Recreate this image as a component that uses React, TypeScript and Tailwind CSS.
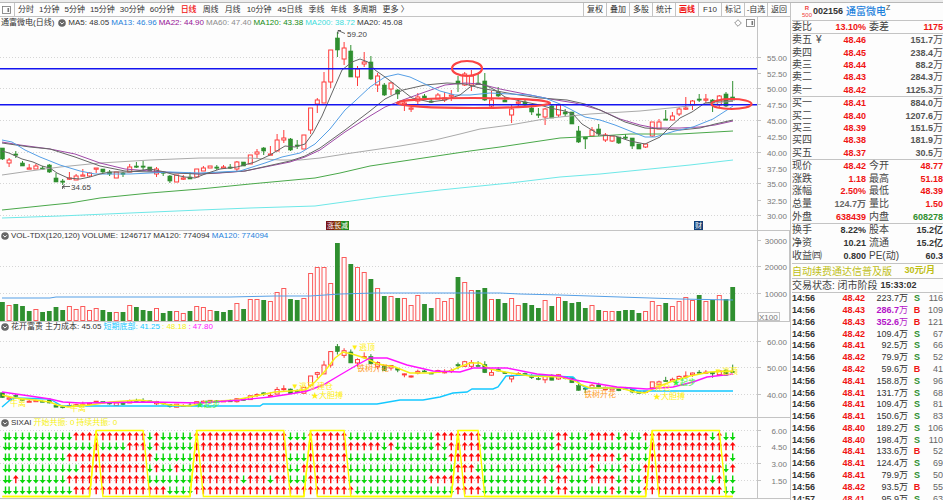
import { useState } from "react";

type Point = [number, number];

interface Tick {
  time: string;
  price: string;
  amount: string;
  side: "S" | "B";
  count: number;
  big?: boolean;
}

const RED = "#ff3b3b";
const GREEN = "#2f8f2f";

const minutePeriods = ["分时", "1分钟", "5分钟", "15分钟", "30分钟", "60分钟"];
const otherPeriods = ["日线", "周线", "月线", "10分钟", "45日线", "季线", "年线", "多周期", "更多 〉"];
const tools = ["复权", "叠加", "多股", "统计", "画线", "F10", "标记", "-自选", "返回"];

// high, body top, body bottom, low, 1 = rising / 0 = falling
const candles: number[][] = [
  [148, 148, 159, 160, 0], [158, 160, 163, 167, 1], [151, 154, 155, 158, 0], [161, 163, 166, 166, 0],
  [164, 168, 169, 169, 1], [164, 166, 169, 169, 1], [166, 168, 169, 170, 0], [164, 165, 172, 173, 0],
  [173, 178, 182, 182, 0], [179, 181, 182, 185, 0], [172, 178, 179, 180, 1], [174, 176, 180, 180, 1],
  [169, 175, 176, 176, 1], [172, 173, 176, 177, 1], [168, 168, 169, 173, 1], [169, 169, 172, 173, 0],
  [170, 172, 174, 176, 0], [172, 172, 178, 178, 1], [172, 173, 174, 177, 0], [164, 167, 172, 172, 1],
  [162, 166, 167, 168, 0], [161, 166, 167, 170, 0], [167, 167, 171, 171, 0], [167, 169, 174, 177, 1],
  [171, 172, 173, 176, 0], [175, 176, 181, 183, 0], [175, 175, 182, 182, 1], [175, 178, 179, 180, 1],
  [172, 177, 179, 179, 0], [169, 169, 177, 177, 1], [166, 168, 171, 171, 1], [166, 166, 168, 168, 1],
  [165, 167, 168, 170, 0], [165, 167, 168, 169, 1], [164, 167, 168, 169, 0], [161, 162, 169, 171, 1],
  [162, 162, 166, 166, 0], [155, 155, 164, 164, 1], [149, 152, 154, 158, 1], [147, 148, 151, 155, 0],
  [146, 154, 155, 155, 1], [134, 140, 151, 151, 1], [130, 138, 140, 143, 1], [138, 139, 150, 151, 0],
  [140, 145, 146, 149, 0], [135, 135, 149, 149, 1], [108, 108, 130, 134, 1], [98, 100, 104, 113, 1],
  [72, 82, 103, 103, 1], [50, 50, 82, 88, 1], [32, 38, 50, 57, 0], [42, 48, 59, 65, 1],
  [45, 51, 77, 77, 0], [66, 69, 77, 86, 1], [52, 62, 64, 67, 1], [56, 62, 79, 80, 0],
  [73, 76, 85, 92, 1], [83, 85, 95, 96, 0], [82, 83, 89, 95, 1], [89, 90, 94, 99, 0],
  [102, 103, 104, 111, 1], [107, 108, 109, 112, 1], [93, 97, 101, 104, 1], [94, 96, 98, 99, 0],
  [99, 101, 102, 103, 0], [93, 95, 99, 99, 1], [92, 98, 100, 102, 1], [90, 95, 96, 101, 1],
  [76, 81, 84, 92, 0], [72, 74, 85, 86, 1], [70, 76, 85, 91, 1], [73, 83, 84, 84, 0],
  [73, 81, 100, 101, 0], [91, 100, 106, 107, 1], [87, 92, 96, 97, 0], [97, 100, 102, 102, 0],
  [105, 109, 115, 123, 1], [99, 102, 103, 107, 1], [100, 102, 105, 106, 0], [104, 108, 112, 115, 0],
  [108, 114, 115, 118, 0], [108, 109, 117, 125, 1], [104, 106, 118, 118, 0], [104, 105, 115, 117, 1],
  [109, 112, 114, 116, 0], [112, 112, 124, 124, 0], [126, 131, 142, 143, 0], [137, 137, 139, 149, 0],
  [127, 130, 136, 137, 1], [124, 129, 134, 136, 0], [133, 135, 140, 142, 1], [136, 136, 141, 142, 1],
  [137, 137, 143, 144, 0], [134, 137, 138, 139, 0], [138, 138, 146, 149, 0], [144, 144, 149, 149, 0],
  [144, 144, 147, 148, 1], [122, 122, 136, 137, 1], [119, 122, 129, 129, 1], [110, 119, 120, 120, 0],
  [112, 116, 120, 120, 1], [107, 109, 114, 116, 1], [97, 108, 109, 110, 1], [100, 101, 105, 110, 1],
  [94, 99, 100, 102, 0], [94, 99, 100, 103, 1], [99, 100, 103, 112, 0], [95, 96, 105, 107, 1],
  [92, 94, 106, 107, 0], [81, 97, 100, 100, 0],
];

// bar height; a negative value is a falling day
const volumes = [
  -19, 16, -17, -15, -10, 12, -9, -10, -14, -11, 15, 12, 15, 11, 13, -11, -9, 9, -9, 16,
  -14, -11, -10, 13, -8, -10, 10, 8, -10, 15, 14, 11, -10, -9, -11, 18, -12, 22, 22, -21,
  20, 29, 33, -22, -21, 23, 48, 54, 54, 38, -78, 64, -57, 54, 49, -42, 33, -25, 25, -23,
  23, 16, 26, -17, -13, 23, 20, 23, -44, 39, 31, -31, -33, 22, -22, -18, 23, 16, -18, -16,
  -13, 21, -15, 24, -20, -18, -19, -13, 16, -11, 10, 10, -10, -11, -11, -8, 10, 20, 16, -18,
  15, 20, 24, 21, -26, 20, -21, 26, -22, -34,
];

const ma5: Point[] = [
  [2, 151], [9, 153], [22, 159], [33, 162], [42, 166], [50, 168], [57, 173], [68, 178], [80, 179],
  [90, 177], [100, 174], [110, 172], [130, 172], [150, 169], [165, 172], [175, 175], [185, 177],
  [195, 178], [205, 174], [220, 169], [237, 167], [255, 162], [270, 155], [285, 146], [295, 147],
  [305, 144], [313, 133], [322, 116], [335, 86], [342, 70], [352, 62], [360, 59], [368, 62],
  [375, 70], [385, 77], [393, 83], [403, 91], [412, 98], [430, 102], [445, 100], [460, 95],
  [470, 87], [478, 84], [485, 85], [495, 90], [505, 97], [520, 101], [540, 105], [550, 108],
  [565, 111], [573, 114], [582, 124], [600, 135], [615, 136], [630, 141], [645, 144], [660, 137],
  [670, 127], [680, 118], [692, 112], [705, 103], [720, 101], [733, 101],
];
const ma13: Point[] = [
  [2, 140], [12, 142], [25, 150], [40, 157], [60, 165], [80, 171], [95, 174], [130, 174], [170, 172],
  [200, 173], [240, 171], [265, 163], [282, 157], [300, 153], [315, 144], [330, 129], [345, 110],
  [355, 101], [370, 87], [385, 77], [398, 74], [410, 77], [425, 84], [440, 91], [455, 95],
  [470, 95], [490, 93], [510, 94], [530, 95], [545, 98], [560, 104], [570, 109], [585, 117],
  [600, 120], [615, 125], [630, 131], [645, 137], [655, 137], [675, 131], [693, 127], [713, 119],
  [727, 110], [733, 106],
];
const ma22: Point[] = [
  [2, 142], [20, 145], [50, 149], [75, 154], [100, 163], [125, 169], [150, 171], [180, 173],
  [200, 174], [220, 173], [245, 171], [270, 166], [290, 162], [305, 157], [320, 150], [345, 132],
  [370, 116], [385, 107], [400, 101], [425, 92], [445, 85], [465, 83], [480, 84], [500, 89],
  [525, 94], [550, 99], [575, 103], [600, 110], [620, 119], [640, 125], [655, 128], [680, 128],
  [700, 127], [715, 125], [733, 121],
];
const ma20: Point[] = [
  [2, 143], [30, 147], [50, 149], [75, 157], [100, 166], [125, 171], [150, 172], [200, 174],
  [245, 171], [290, 161], [305, 156], [320, 148], [345, 130], [370, 111], [385, 99], [403, 90],
  [425, 85], [447, 83], [465, 84], [480, 88], [513, 94], [540, 98], [567, 100], [585, 104],
  [600, 110], [625, 122], [645, 128], [680, 130], [700, 128], [715, 124], [733, 120],
];
const ma60: Point[] = [
  [2, 175], [30, 171], [60, 167], [100, 163], [150, 160], [200, 158], [250, 158], [280, 160],
  [300, 160], [320, 158], [345, 154], [400, 146], [435, 140], [460, 134], [480, 129], [510, 125],
  [550, 118], [590, 114], [640, 111], [680, 107], [705, 104], [733, 101],
];
const ma120: Point[] = [
  [2, 210], [50, 205], [70, 203], [100, 198], [150, 193], [200, 189], [250, 184], [315, 178],
  [340, 173], [370, 166], [410, 160], [470, 151], [500, 147], [560, 138], [600, 136], [630, 134],
  [680, 134], [733, 131],
];
const ma200: Point[] = [
  [2, 218], [60, 216], [130, 213], [200, 210], [250, 208], [315, 206], [380, 197], [440, 190],
  [510, 183], [560, 177], [600, 174], [640, 170], [690, 165], [733, 160],
];
const volumeMa: Point[] = [
  [2, 298], [50, 298], [56, 297], [230, 297], [275, 296], [310, 296], [340, 294], [375, 293],
  [500, 293], [520, 294], [560, 295], [620, 297], [680, 299], [733, 300],
];
const costLine: Point[] = [
  [2, 395], [15, 398], [35, 400], [50, 402], [57, 405], [68, 407], [90, 405], [110, 402],
  [140, 400], [155, 402], [170, 405], [190, 406], [205, 402], [235, 400], [255, 396], [275, 392],
  [290, 391], [305, 390], [315, 382], [325, 371], [335, 358], [343, 352], [352, 354], [365, 358],
  [378, 364], [395, 367], [410, 373], [430, 373], [450, 371], [462, 366], [470, 363], [480, 363],
  [490, 369], [505, 372], [530, 376], [560, 377], [573, 380], [582, 385], [590, 388], [620, 388],
  [635, 392], [645, 393], [655, 388], [670, 382], [690, 376], [710, 372], [733, 371],
];
const trendLine: Point[] = [
  [2, 392], [30, 396], [50, 399], [63, 402], [80, 403], [150, 402], [200, 403], [240, 400],
  [270, 397], [290, 394], [307, 391], [323, 385], [340, 375], [357, 365], [370, 358], [387, 358],
  [407, 365], [433, 371], [460, 372], [473, 368], [507, 368], [537, 374], [560, 376], [575, 380],
  [593, 383], [617, 387], [647, 389], [673, 387], [693, 382], [707, 377], [733, 374],
];
const bottomLine: Point[] = [
  [2, 407], [10, 400], [15, 398], [50, 399], [55, 402], [62, 406], [260, 406], [263, 404],
  [377, 404], [400, 400], [423, 400], [440, 397], [453, 393], [467, 392], [472, 389], [493, 389],
  [498, 387], [506, 376], [523, 375], [573, 377], [580, 384], [586, 388], [630, 388], [638, 391],
  [733, 391],
];

// run lengths of each arrow row, starting with a "down" run
const arrowRuns = [
  [11, 11, 1, 1, 5, 14, 3, 6, 13, 7, 11, 2, 3, 4, 1, 1, 2, 10, 1, 1, 2],
  [14, 1, 4, 3, 1, 1, 5, 28, 1, 1, 6, 1, 1, 5, 11, 1, 13, 13],
  [10, 13, 6, 14, 3, 6, 15, 5, 16, 4, 1, 1, 3, 12, 1],
  [12, 10, 1, 1, 2, 1, 2, 14, 2, 7, 16, 3, 12, 1, 4, 1, 4, 1, 2, 12, 1, 1],
  [2, 1, 7, 12, 7, 7, 1, 3, 1, 2, 3, 6, 12, 8, 9, 1, 1, 2, 3, 4, 1, 1, 2, 10, 1, 1, 2],
  [11, 14, 4, 24, 15, 4, 11, 2, 6, 1, 1, 1, 2, 12, 2],
];
const arrowRowY = [436, 446, 457, 468, 479, 490];
const resonance: Point[] = [[14, 21], [29, 42], [46, 51], [68, 71], [97, 107]];

const sells = [
  ["卖五", "48.46", "151.7"],
  ["卖四", "48.45", "238.4"],
  ["卖三", "48.44", "88.2"],
  ["卖二", "48.43", "284.3"],
  ["卖一", "48.42", "1125.3"],
];
const buys = [
  ["买一", "48.41", "884.0"],
  ["买二", "48.40", "1207.6"],
  ["买三", "48.39", "151.5"],
  ["买四", "48.38", "181.9"],
  ["买五", "48.37", "30.5"],
];

const up = "text-[#f01414]";
const flat = "text-[#333]";
const down = "text-[#2f8f2f]";

const quotes = [
  ["现价", "48.42", up, "今开", "48.77", up],
  ["涨跌", "1.18", up, "最高", "51.18", up],
  ["涨幅", "2.50%", up, "最低", "48.39", up],
  ["总量", "124.7万", "text-[#666]", "量比", "1.50", up],
  ["外盘", "638439", up, "内盘", "608278", down],
];
const basics = [
  ["换手", "8.22%", flat, "股本", "15.2亿", flat],
  ["净资", "10.21", flat, "流通", "15.2亿", flat],
  ["收益㈣", "0.800", flat, "PE(动)", "60.3", flat],
];

const ticks: Tick[] = [
  { time: "14:56", price: "48.42", amount: "223.7", side: "S", count: 116 },
  { time: "14:56", price: "48.43", amount: "286.7", side: "B", count: 109, big: true },
  { time: "14:56", price: "48.43", amount: "352.6", side: "B", count: 121, big: true },
  { time: "14:56", price: "48.42", amount: "109.4", side: "S", count: 67 },
  { time: "14:56", price: "48.41", amount: "92.5", side: "S", count: 66 },
  { time: "14:56", price: "48.42", amount: "79.9", side: "S", count: 52 },
  { time: "14:56", price: "48.42", amount: "59.6", side: "B", count: 41 },
  { time: "14:56", price: "48.41", amount: "158.8", side: "S", count: 96 },
  { time: "14:56", price: "48.41", amount: "131.7", side: "S", count: 68 },
  { time: "14:56", price: "48.41", amount: "109.4", side: "S", count: 81 },
  { time: "14:56", price: "48.41", amount: "150.6", side: "S", count: 83 },
  { time: "14:56", price: "48.40", amount: "189.2", side: "S", count: 106 },
  { time: "14:56", price: "48.40", amount: "198.4", side: "S", count: 110 },
  { time: "14:56", price: "48.41", amount: "133.6", side: "B", count: 52 },
  { time: "14:56", price: "48.41", amount: "124.4", side: "S", count: 69 },
  { time: "14:56", price: "48.41", amount: "79.9", side: "S", count: 50 },
  { time: "14:56", price: "48.42", amount: "93.5", side: "B", count: 55 },
  { time: "14:57", price: "48.41", amount: "95.9", side: "S", count: 63 },
];

const columnX = (index: number) => 2.4 + index * 6.7;
const toPoints = (points: Point[]) => points.map((p) => p.join(",")).join(" ");

function Line({ points, color, width = 1 }: { points: Point[]; color: string; width?: number }) {
  return <polyline points={toPoints(points)} fill="none" stroke={color} strokeWidth={width} />;
}

function Axis({ top, bottom, labels, grid }: {
  top: number;
  bottom: number;
  labels: [string, number][];
  grid: number[];
}) {
  return (
    <g>
      {grid.map((y) => (
        <line key={y} x1="0" x2="757" y1={y + 0.5} y2={y + 0.5} stroke="#d6d6d6" strokeDasharray="1 2" />
      ))}
      <line x1="757.5" x2="757.5" y1={top} y2={bottom} stroke="#c4c4c4" />
      {labels.map(([label, y]) => (
        <g key={label}>
          <line x1="758" x2="761" y1={y + 0.5} y2={y + 0.5} stroke="#c4c4c4" />
          <text x="787" y={y + 4} textAnchor="end" fontSize="8" fill="#787878">
            {label}
          </text>
        </g>
      ))}
    </g>
  );
}

function Candles({ project, small }: { project: (y: number) => number; small?: boolean }) {
  return (
    <g>
      {candles.map(([high, top, bottom, low, rising], index) => {
        const x = columnX(index);
        const y = project(top);
        const height = Math.max(project(bottom) - y, small ? 1 : 1.2);
        const color = rising ? RED : GREEN;
        return (
          <g key={index}>
            <line x1={x} x2={x} y1={project(high)} y2={project(low)} stroke={color} />
            <rect
              x={x - 2}
              y={y}
              width="4"
              height={height}
              fill={rising ? "#fdfdfd" : GREEN}
              stroke={color}
              strokeWidth={rising ? 1 : 0.6}
            />
          </g>
        );
      })}
    </g>
  );
}

function CollapseButton({ label }: { label: string }) {
  return (
    <button aria-label={label} className="shrink-0">
      <svg viewBox="0 0 8 8" className="h-2 w-2">
        <circle cx="4" cy="4" r="3.8" fill="#666" />
        <path d="M2.2 3.3 4 5.1 5.8 3.3" fill="none" stroke="#fff" strokeWidth="1" />
      </svg>
    </button>
  );
}

function PanelIcon() {
  return (
    <svg viewBox="0 0 9 8" className="h-2 w-[9px]">
      <rect x=".5" y=".5" width="8" height="7" fill="none" stroke="#777" strokeWidth=".8" />
      <rect x="5.5" y="2" width="1.6" height="4" fill="#777" />
    </svg>
  );
}

function PanelHeader({ children, className }: { children: React.ReactNode; className: string }) {
  return (
    <div className={`flex leading-[10px] ${className}`}>
      <div className="flex min-w-0 flex-1 items-center gap-[2px] border-r border-[#c4c4c4] pl-px whitespace-nowrap">
        {children}
      </div>
      <div className="w-8" />
    </div>
  );
}

function PriceChart() {
  return (
    <svg viewBox="0 29 790 201" className="block h-auto w-full overflow-visible">
      <Axis
        top={29}
        bottom={230}
        grid={[57, 88, 120, 152, 183, 215]}
        labels={[
          ["55.00", 57], ["52.50", 73], ["50.00", 88], ["47.50", 104], ["45.00", 120], ["42.50", 136],
          ["40.00", 152], ["37.50", 168], ["35.00", 183], ["32.50", 200], ["30.00", 215],
        ]}
      />
      <Candles project={(y) => y} />
      <Line points={ma200} color="#6ee8e8" />
      <Line points={ma120} color="#4aa84a" />
      <Line points={ma60} color="#aaaaaa" />
      <Line points={ma22} color="#a04aa8" />
      <Line points={ma20} color="#666666" />
      <Line points={ma13} color="#559fe6" />
      <Line points={ma5} color="#666666" />
      <g stroke="#1414f0" strokeWidth="1.5">
        <line x1="0" x2="757" y1="68.8" y2="68.8" />
        <line x1="0" x2="757" y1="104.8" y2="104.8" />
      </g>
      <g fill="none" stroke="#fb4444" strokeWidth="2.2">
        <ellipse cx="467" cy="68.5" rx="15" ry="7.5" />
        <ellipse cx="473.5" cy="103" rx="76.5" ry="5" />
        <ellipse cx="731.5" cy="104" rx="20" ry="5" />
      </g>
      <g fill="none" stroke="#444" strokeWidth=".8">
        <path d="M338 30.5 345 33.5M338 34V30.5H341" />
        <path d="M62.5 186.5H70M62.5 189V186.5M65 184.5 62.5 186.5 65 188.5" />
      </g>
      <g fontSize="8" fill="#444">
        <text x="347" y="37">59.20</text>
        <text x="71" y="190">34.65</text>
      </g>
      <g>
        <rect x="326" y="221" width="9" height="9" fill="#7a1414" />
        <rect x="334" y="221" width="8" height="9" fill="#8a4a14" />
        <rect x="341" y="221" width="8" height="9" fill="#1f8a1f" />
        <rect x="694" y="221" width="9" height="9" fill="#123f78" />
      </g>
      <g fontSize="7" fill="#fff">
        <text x="327" y="228">涨</text>
        <text x="334" y="228">长</text>
        <text x="341" y="228">减</text>
        <text x="695" y="228">财</text>
      </g>
    </svg>
  );
}

function VolumeChart() {
  return (
    <svg viewBox="0 241 790 80" className="block h-auto w-full overflow-visible">
      <Axis
        top={241}
        bottom={321}
        grid={[266, 293]}
        labels={[["30000", 240], ["20000", 266], ["10000", 293]]}
      />
      <line x1="789.5" x2="789.5" y1="231" y2="321" stroke="#c4c4c4" />
      {volumes.map((value, index) => {
        const height = Math.abs(value);
        const rising = value > 0;
        return (
          <rect
            key={index}
            x={columnX(index) - (rising ? 2 : 2.4)}
            y={321 - height + (rising ? 0.5 : 0)}
            width={rising ? 4 : 4.8}
            height={height - (rising ? 1 : 0)}
            fill={rising ? "#fdfdfd" : GREEN}
            stroke={rising ? "#fb5a5a" : "none"}
            strokeWidth="1"
          />
        );
      })}
      <Line points={volumeMa} color="#559fe6" />
      <rect x="758.5" y="312.5" width="21" height="8" fill="#fdfdfd" stroke="#c4c4c4" />
      <text x="759" y="320" fontSize="8" fill="#777">X100</text>
    </svg>
  );
}

function CostChart() {
  return (
    <svg viewBox="0 332 790 85" className="block h-auto w-full overflow-visible">
      <Axis
        top={332}
        bottom={417}
        grid={[341, 367, 394]}
        labels={[["60.00", 341], ["50.00", 367], ["40.00", 394]]}
      />
      <Candles project={(y) => 368 + (y - 89) * 0.421} small />
      <Line points={bottomLine} color="#14c8ff" width={1.4} />
      <Line points={costLine} color="#f5f014" width={1.4} />
      <Line points={trendLine} color="#ff14ff" width={1.4} />
      <g fontSize="8" fill="#fff014">
        <text x="10" y="406">牛离</text>
        <text x="70" y="411">牛离</text>
        <text x="291" y="389">▼逃顶</text>
        <text x="317" y="389">建仓</text>
        <text x="311" y="398">★大胆搏</text>
        <text x="351" y="350">▼逃顶</text>
        <text x="655" y="390">建仓</text>
        <text x="653" y="399">★大胆搏</text>
        <text x="714" y="374">▼逃顶</text>
      </g>
      <g fontSize="8" fill="#3bf03b">
        <text x="196" y="407">★起步</text>
        <text x="672" y="385">★起步</text>
      </g>
      <g fontSize="8" fill="#ffa028">
        <text x="357" y="371">铁树开花</text>
        <text x="584" y="397">铁树开花</text>
      </g>
    </svg>
  );
}

function ArrowChart() {
  const spikes: Point[] = [[columnX(0), 496.5]];
  const plateaus: Point[] = [[columnX(0), 496.5]];
  resonance.forEach(([start, end]) => {
    spikes.push([columnX(start - 1), 496.5], [columnX(start), 430.5], [columnX(start + 1), 496.5]);
    plateaus.push(
      [columnX(start - 1), 496.5],
      [columnX(start), 430.5],
      [columnX(end), 430.5],
      [columnX(end + 1), 496.5]
    );
  });
  spikes.push([columnX(109), 496.5]);
  plateaus.push([columnX(109), 496.5]);

  return (
    <svg viewBox="0 428 790 70" className="block h-auto w-full overflow-visible">
      <Axis
        top={428}
        bottom={498}
        grid={[430, 446, 463, 480]}
        labels={[["6.00", 430], ["4.50", 446], ["3.00", 463], ["1.50", 480]]}
      />
      {arrowRuns.map((runs, row) => {
        const rising = runs.flatMap((length, run) => Array<boolean>(length).fill(run % 2 === 1));
        return rising.map((isUp, index) => {
          const x = index === 0 ? 5.5 : columnX(index);
          const y = arrowRowY[row];
          return (
            <path
              key={`${row}-${index}`}
              d={
                isUp
                  ? `M${x} ${y - 4}l2.9 3.6h-2.2v4.6h-1.4v-4.6h-2.2z`
                  : `M${x} ${y + 4.6}l2.9 -3.6h-2.2v-4.6h-1.4v4.6h-2.2z`
              }
              fill={isUp ? "#ff0a0a" : "#0ad60a"}
            />
          );
        });
      })}
      <Line points={spikes} color="#ffff00" width={1.4} />
      <Line points={plateaus} color="#ffff00" width={1.4} />
    </svg>
  );
}

function OrderTable({ rows, mark }: { rows: string[][]; mark?: boolean }) {
  return (
    <table className="h-[63px] w-full table-fixed border-b border-[#c4c4c4] leading-[12px]">
      <tbody>
        {rows.map(([label, price, amount], index) => (
          <tr key={label}>
            <th className="w-[34px] p-0 text-left text-[10px] font-normal whitespace-nowrap">
              {label}
              {mark && index === 0 && <span className="pl-1">¥</span>}
            </th>
            <td className="w-[40px] p-0 text-right font-bold text-[#f01414]">{price}</td>
            <td className="p-0 text-right font-bold text-[#555]">
              {amount}
              <span className="text-[10px] font-normal">万</span>
            </td>
          </tr>
        ))}
      </tbody>
    </table>
  );
}

function QuoteTable({ rows, className }: { rows: string[][]; className: string }) {
  return (
    <table className={`w-full table-fixed border-b border-[#c4c4c4] leading-[12px] ${className}`}>
      <tbody>
        {rows.map(([label, value, color, label2, value2, color2]) => (
          <tr key={label}>
            <th className="w-[32px] p-0 text-left text-[10px] font-normal whitespace-nowrap">{label}</th>
            <td className={`w-[42px] p-0 text-right font-bold ${color}`}>{value}</td>
            <th className="w-[35px] p-0 pl-[3px] text-left text-[10px] font-normal whitespace-nowrap">
              {label2}
            </th>
            <td className={`p-0 text-right font-bold ${color2}`}>{value2}</td>
          </tr>
        ))}
      </tbody>
    </table>
  );
}

function Sidebar() {
  return (
    <aside className="w-[153px] shrink-0 overflow-hidden border-l border-[#c4c4c4] pl-px text-[9px] text-[#444]">
      <div className="flex h-[18px] items-center border-b border-[#c4c4c4] pl-[10px]">
        <span className="flex flex-col items-center text-[6px] leading-[7px] text-[#f03c3c]">
          <b>R</b>
          <span>500</span>
        </span>
        <span className="pl-px font-bold text-[#333]">002156</span>
        <h1 className="pl-[3px] text-[10px] font-medium text-[#1e82dc]">通富微电</h1>
        <sup className="text-[7px]">Z</sup>
      </div>

      <QuoteTable rows={[["委比", "13.10%", up, "委差", "1175", up]]} className="h-[13px]" />
      <OrderTable rows={sells} mark />
      <OrderTable rows={buys} />
      <QuoteTable rows={quotes} className="h-[64px]" />
      <QuoteTable rows={basics} className="h-[40px]" />

      <a
        href="#renew"
        className="flex h-[15px] items-center justify-between border-b border-[#c4c4c4] pr-2 text-[10px] whitespace-nowrap text-[#bebe14]"
      >
        <span>自动续费通达信普及版</span>
        <b className="text-[9px] font-bold">30元/月</b>
      </a>
      <p className="flex h-[14px] items-center gap-[3px] border-b border-[#c4c4c4] text-[10px] whitespace-nowrap">
        交易状态: 闭市阶段
        <b className="text-[9px] text-[#333]">15:33:02</b>
      </p>

      <table className="h-[212px] w-full table-fixed leading-[11px]">
        <tbody>
          {ticks.map((tick, index) => (
            <tr key={index}>
              <td className="w-[34px] p-0 font-bold text-[#333]">{tick.time}</td>
              <td className="w-[39px] p-0 text-right font-bold text-[#f01414]">{tick.price}</td>
              <td
                className={`w-[43px] p-0 text-right ${tick.big ? "font-bold text-[#b414c8]" : "font-medium text-[#333]"}`}
              >
                {tick.amount}
                <span className="font-normal">万</span>
              </td>
              <td className={`w-[18px] p-0 text-center font-bold ${tick.side === "B" ? up : down}`}>
                {tick.side}
              </td>
              <td className="p-0 text-right text-[#666]">{tick.count}</td>
            </tr>
          ))}
        </tbody>
      </table>
    </aside>
  );
}

export default function App() {
  const [period, setPeriod] = useState("日线");
  const [tool, setTool] = useState("画线");

  const renderPeriod = (name: string) => (
    <button
      key={name}
      onClick={() => setPeriod(name)}
      className={period === name ? "font-medium text-[#f01414]" : ""}
    >
      {name}
    </button>
  );

  return (
    <div className="flex h-screen flex-col overflow-hidden bg-[#fdfdfd] font-['Liberation_Sans','Noto_Sans_CJK_SC',sans-serif] text-[8px] text-[#333]">
      <div className="h-[3px] shrink-0 border-b border-[#b8b8b8] bg-[#ececec]" />

      <div className="flex min-h-0 flex-1">
        <main className="min-w-0 flex-1">
          <nav className="flex h-[14px] border-b border-[#c4c4c4] leading-[14px] whitespace-nowrap">
            <button aria-label="侧栏" className="w-[15px] border-r border-[#c4c4c4] pl-[2px]">
              <PanelIcon />
            </button>
            <div className="flex gap-[5px] pl-[3px]">{minutePeriods.map(renderPeriod)}</div>
            <div className="flex gap-[6px] pl-[6px]">{otherPeriods.map(renderPeriod)}</div>
            <div className="ml-auto flex">
              {tools.map((name) => (
                <button
                  key={name}
                  onClick={() => setTool(name)}
                  className={`w-[23px] border-l border-[#c4c4c4] ${tool === name ? "font-bold text-[#f01414]" : ""}`}
                >
                  {name}
                </button>
              ))}
            </div>
          </nav>

          <section>
            <PanelHeader className="h-[12px]">
              <span className="pr-[2px]">通富微电(日线)</span>
              <CollapseButton label="主图" />
              <span>MA5: 48.05</span>
              <span className="text-[#1e82dc]">MA13: 46.96</span>
              <span className="text-[#961496]">MA22: 44.90</span>
              <span className="text-[#8c8c8c]">MA60: 47.40</span>
              <span className="text-[#148c14]">MA120: 43.38</span>
              <span className="text-[#3cdcdc]">MA200: 38.72</span>
              <span>MA20: 45.08</span>
              <span className="ml-auto flex items-center gap-[4px] pr-[2px]">
                <svg viewBox="0 0 8 8" className="h-2 w-2">
                  <path d="M4 .7 7.3 4 4 7.3.7 4Z" fill="none" stroke="#777" strokeWidth=".8" />
                </svg>
                <PanelIcon />
              </span>
            </PanelHeader>
            <PriceChart />
          </section>

          <section className="border-t border-[#c4c4c4]">
            <PanelHeader className="h-[10px]">
              <CollapseButton label="成交量" />
              <span>VOL-TDX(120,120)</span>
              <span>VOLUME: 1246717</span>
              <span>MA120: 774094</span>
              <span className="text-[#1e82dc]">MA120: 774094</span>
            </PanelHeader>
            <VolumeChart />
          </section>

          <section className="border-t border-[#c4c4c4]">
            <PanelHeader className="h-[10px]">
              <CollapseButton label="花开富贵" />
              <span>花开富贵</span>
              <span>主力成本: 45.05</span>
              <span className="text-[#14c8ff]">短期底部: 41.25</span>
              <span className="text-[#f5f014]">: 48.18</span>
              <span className="text-[#ff14ff]">: 47.80</span>
            </PanelHeader>
            <CostChart />
          </section>

          <section className="border-y border-[#c4c4c4]">
            <PanelHeader className="h-[10px]">
              <CollapseButton label="SIXAI" />
              <span>SIXAI</span>
              <span className="text-[#f5f014]">开始共振: 0</span>
              <span className="text-[#f5f014]">持续共振: 0</span>
            </PanelHeader>
            <ArrowChart />
          </section>
        </main>

        <Sidebar />
      </div>
    </div>
  );
}
